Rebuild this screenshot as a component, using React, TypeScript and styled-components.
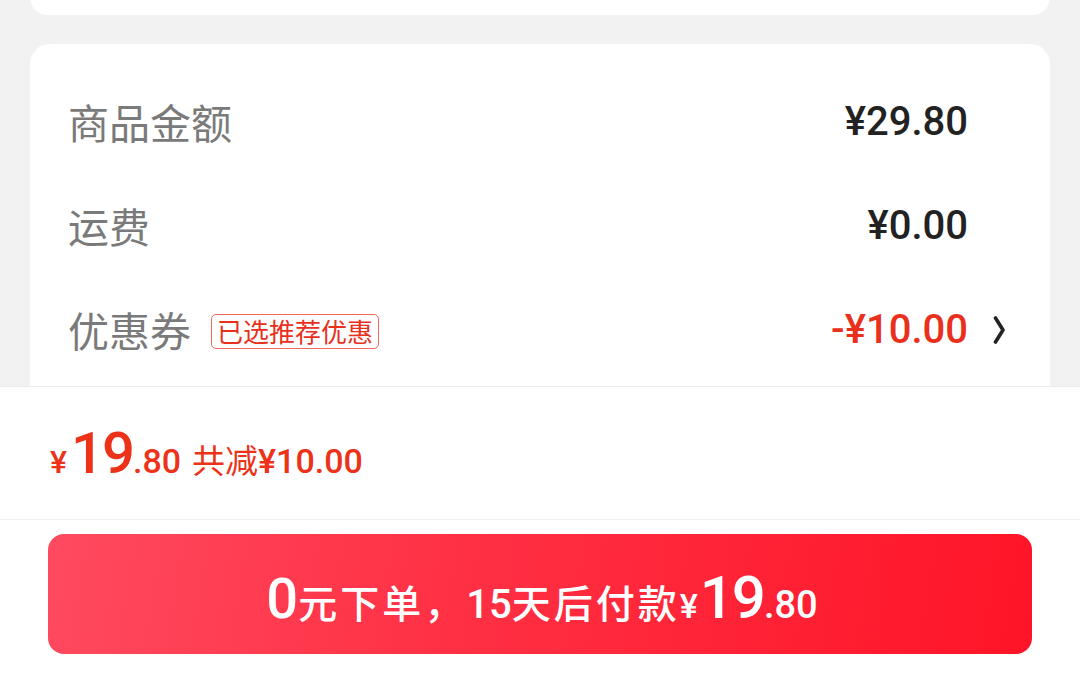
import React from "react";
import styled, { createGlobalStyle } from "styled-components";

const GlobalStyle = createGlobalStyle`
  html, body {
    margin: 0;
    padding: 0;
    background: #f2f2f2;
  }
  body {
    font-family: Roboto, "Noto Sans CJK SC", sans-serif;
  }
`;

const Page = styled.div`
  width: 1080px;
  height: 691px;
  display: flex;
  flex-direction: column;
  overflow: hidden;
  background: #f2f2f2;
`;

const Scroll = styled.div`
  flex: 1;
  min-height: 0;
  overflow: hidden;
  padding: 0 30px;
  display: flex;
  flex-direction: column;
  gap: 29px;
`;

const Card = styled.div<{ $stub?: boolean }>`
  background: #fff;
  border-radius: 20px;
  flex-shrink: 0;
  ${(p) =>
    p.$stub
      ? "height: 35px; margin-top: -20px;"
      : "padding: 26px 45px 60px 38px;"}
`;

const Row = styled.div`
  height: 104px;
  display: flex;
  align-items: center;
`;

const Label = styled.span`
  font-family: "Noto Sans CJK SC", sans-serif;
  font-size: 41px;
  color: #7a7a7a;
  line-height: 1;
  margin-top: -2px;
`;

const Tag = styled.span`
  margin-left: 20px;
  height: 35px;
  box-sizing: border-box;
  padding: 0 5px;
  border: 1px solid #ef6a5c;
  border-radius: 5px;
  font-family: "Noto Sans CJK SC", sans-serif;
  font-size: 26px;
  line-height: 32px;
  color: #e8301c;
  display: inline-flex;
  align-items: center;
  margin-top: 2px;
`;

const Value = styled.span<{ $red?: boolean }>`
  margin-left: auto;
  font-family: Roboto, "Noto Sans CJK SC", sans-serif;
  font-size: 40px;
  font-weight: 500;
  color: ${(p) => (p.$red ? "#e8301c" : "#222")};
  line-height: 1;
`;

const ArrowSlot = styled.span`
  width: 12px;
  height: 30px;
  margin-left: 25px;
  display: inline-flex;
  align-items: center;
`;

const Footer = styled.div`
  flex-shrink: 0;
  height: 304px;
  background: #fff;
  border-top: 1px solid #ececec;
  display: flex;
  flex-direction: column;
`;

const PriceLine = styled.div`
  height: 133px;
  box-sizing: border-box;
  border-bottom: 1px solid #f1f1f1;
  padding: 0 0 0 50px;
  display: flex;
  align-items: center;
`;

const PriceText = styled.div`
  display: flex;
  align-items: baseline;
  color: #ec3219;
  font-family: Roboto, "Noto Sans CJK SC", sans-serif;
  line-height: 1;
`;

const Part = styled.span<{ $size: number; $weight?: number; $ls?: number; $ml?: number }>`
  font-size: ${(p) => p.$size}px;
  font-weight: ${(p) => p.$weight ?? 500};
  letter-spacing: ${(p) => p.$ls ?? 0}px;
  margin-left: ${(p) => p.$ml ?? 0}px;
`;

const Cjk = styled(Part)`
  font-family: "Noto Sans CJK SC", sans-serif;
`;

const ButtonWrap = styled.div`
  padding: 14px 48px 0;
`;

const PayButton = styled.button`
  width: 100%;
  height: 120px;
  border: none;
  border-radius: 16px;
  background: linear-gradient(100deg, #ff4a5f 0%, #ff3145 40%, #ff1427 100%);
  color: #fff;
  display: flex;
  align-items: center;
  justify-content: center;
  padding: 0 0 0 4px;
  cursor: pointer;
`;

const ButtonText = styled.div`
  display: flex;
  align-items: baseline;
  font-family: Roboto, "Noto Sans CJK SC", sans-serif;
  line-height: 1;
  margin-top: 8px;
`;

const Chevron = () => (
  <svg width="12" height="30" viewBox="0 0 12 30" fill="none">
    <polyline
      points="2.5,3 10,15 2.5,27"
      stroke="#222"
      strokeWidth="3.6"
      strokeLinecap="round"
      strokeLinejoin="round"
    />
  </svg>
);

const rows = [
  { label: "商品金额", value: "¥29.80" },
  { label: "运费", value: "¥0.00" },
  { label: "优惠券", value: "-¥10.00", red: true, tag: "已选推荐优惠", arrow: true },
];

export default function App() {
  return (
    <>
      <GlobalStyle />
      <Page>
        <Scroll>
          <Card $stub />
          <Card>
            {rows.map((r) => (
              <Row key={r.label}>
                <Label>{r.label}</Label>
                {r.tag && <Tag>{r.tag}</Tag>}
                <Value $red={r.red}>{r.value}</Value>
                <ArrowSlot>{r.arrow && <Chevron />}</ArrowSlot>
              </Row>
            ))}
          </Card>
        </Scroll>
        <Footer>
          <PriceLine>
            <PriceText>
              <Part $size={32}>¥</Part>
              <Part $size={58} $ls={-2} $ml={4}>19</Part>
              <Part $size={34}>.80</Part>
              <Cjk $size={33} $weight={400} $ml={11}>共减</Cjk>
              <Part $size={34}>¥10.00</Part>
            </PriceText>
          </PriceLine>
          <ButtonWrap>
            <PayButton>
              <ButtonText>
                <Part $size={56}>0</Part>
                <Cjk $size={39} $weight={500} $ls={3}>元下单，</Cjk>
                <Part $size={40}>15</Part>
                <Cjk $size={39} $weight={500} $ls={3}>天后付款</Cjk>
                <Part $size={34}>¥</Part>
                <Part $size={60} $ls={-2} $ml={2}>19</Part>
                <Part $size={38}>.80</Part>
              </ButtonText>
            </PayButton>
          </ButtonWrap>
        </Footer>
      </Page>
    </>
  );
}
